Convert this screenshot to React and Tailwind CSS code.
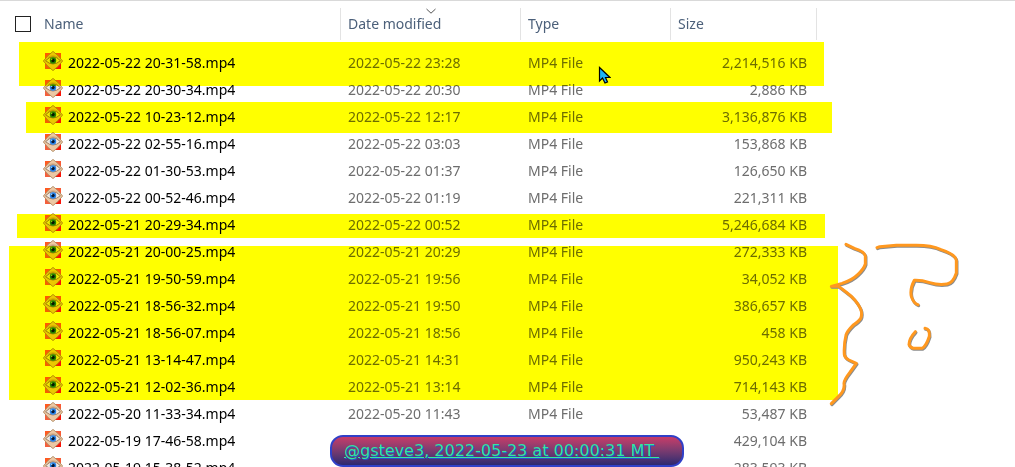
const files = [
  ['2022-05-22 20-31-58.mp4', '2022-05-22 23:28', 'MP4 File', '2,214,516 KB'],
  ['2022-05-22 20-30-34.mp4', '2022-05-22 20:30', 'MP4 File', '2,886 KB'],
  ['2022-05-22 10-23-12.mp4', '2022-05-22 12:17', 'MP4 File', '3,136,876 KB'],
  ['2022-05-22 02-55-16.mp4', '2022-05-22 03:03', 'MP4 File', '153,868 KB'],
  ['2022-05-22 01-30-53.mp4', '2022-05-22 01:37', 'MP4 File', '126,650 KB'],
  ['2022-05-22 00-52-46.mp4', '2022-05-22 01:19', 'MP4 File', '221,311 KB'],
  ['2022-05-21 20-29-34.mp4', '2022-05-22 00:52', 'MP4 File', '5,246,684 KB'],
  ['2022-05-21 20-00-25.mp4', '2022-05-21 20:29', 'MP4 File', '272,333 KB'],
  ['2022-05-21 19-50-59.mp4', '2022-05-21 19:56', 'MP4 File', '34,052 KB'],
  ['2022-05-21 18-56-32.mp4', '2022-05-21 19:50', 'MP4 File', '386,657 KB'],
  ['2022-05-21 18-56-07.mp4', '2022-05-21 18:56', 'MP4 File', '458 KB'],
  ['2022-05-21 13-14-47.mp4', '2022-05-21 14:31', 'MP4 File', '950,243 KB'],
  ['2022-05-21 12-02-36.mp4', '2022-05-21 13:14', 'MP4 File', '714,143 KB'],
  ['2022-05-20 11-33-34.mp4', '2022-05-20 11:43', 'MP4 File', '53,487 KB'],
  ['2022-05-19 17-46-58.mp4', '', '', '429,104 KB'],
  ['2022-05-19 15-38-52.mp4', '', '', '283,593 KB'],
];

function EyeIcon() {
  return (
    <svg className="-mt-[3px] h-5 w-5 shrink-0" viewBox="0 0 20 20" aria-hidden="true">
      <rect x="2" y="2" width="8" height="8" fill="#ff5a20" />
      <rect x="10" y="2" width="8" height="8" fill="#f85a34" />
      <rect x="2" y="10" width="8" height="8" fill="#f4603c" />
      <rect x="10" y="10" width="8" height="8" fill="#f81408" />
      <path
        d="M10 .4 15.2 4.8 19.6 10 15.2 15.2 10 19.6 4.8 15.2.4 10 4.8 4.8Z"
        fill="#ecc8a4"
        stroke="#b08a62"
        strokeWidth=".9"
      />
      <path d="M5.2 6.4Q10 3.2 14.8 6.4" fill="none" stroke="#c29a74" strokeWidth=".7" />
      <path d="M2.6 9.7Q10 1.9 17.4 9.7 10 16.3 2.6 9.7Z" fill="#efe9e0" stroke="#8a6a50" strokeWidth=".8" />
      <circle cx="10" cy="9.5" r="3.2" fill="#2682e8" />
      <circle cx="10" cy="9.5" r="1.7" fill="#061630" />
      <circle cx="8.6" cy="8.4" r=".8" fill="#8cd0ff" />
    </svg>
  );
}

function HeaderCell({ width, children }) {
  return (
    <th scope="col" className={`${width} h-[49px] p-0 pt-2 align-top font-normal`}>
      <div className="relative flex h-8 items-center border-r border-[#e3e3e3] pl-[7px]">{children}</div>
    </th>
  );
}

function Highlight({ place }) {
  return <div className={`pointer-events-none absolute bg-[#ffff00] mix-blend-multiply ${place}`} />;
}

function Scribble() {
  return (
    <svg
      className="pointer-events-none absolute top-[229px] left-[800px] h-[190px] w-[180px]"
      viewBox="0 0 540 570"
      fill="none"
      strokeLinecap="round"
      strokeLinejoin="round"
      aria-hidden="true"
    >
      <defs>
        <g id="ink">
          <path d="M139 44 164 56Q194 65 197 79V103Q193 117 175 134 158 151 127 161L95 170H117L139 187Q168 208 182 236 189 252 183 266 178 274 162 285 142 305 139 316 132 345 134 375 136 385 148 391L170 401 150 429Q132 452 133 462 136 482 116 501L95 522" />
          <path d="M232 54 240 51 290 47H350Q395 47 424 60 468 74 470 92V130Q460 160 442 163 417 167 390 159 365 151 344 152 330 178 335 200 342 222 355 225" />
          <path d="M347 306Q328 326 328 345 332 354 341 356H367Q379 351 389 320 391 298 376 296" />
        </g>
      </defs>
      <use href="#ink" x="1" y="2" stroke="#8c8c8c" strokeWidth="9" />
      <use href="#ink" x="-1" y="-1" stroke="#ff981f" strokeWidth="9" />
    </svg>
  );
}

export default function App() {
  return (
    <main className="relative h-screen overflow-hidden border-t border-[#d9d9d9] bg-white font-['Noto_Sans',sans-serif] text-[14px] leading-5">
      <div className="-mt-px">
        <table className="w-[817px] table-fixed border-collapse text-left text-[#6d6d6d]">
          <thead className="text-[#4c607a]">
            <tr>
              <HeaderCell width="w-[341px]">
                <label className="flex items-center pl-2">
                  <input
                    type="checkbox"
                    aria-label="Select all files"
                    className="h-4 w-4 appearance-none border border-[#222] bg-white"
                  />
                </label>
                <span className="pl-[13px]">Name</span>
              </HeaderCell>
              <HeaderCell width="w-[180px]">
                Date modified
                <svg className="absolute top-0 left-[85px] h-[6px] w-[10px]" viewBox="0 0 10 6" fill="none" aria-hidden="true">
                  <path d="M.5 1 5 5.2 9.5 1" stroke="#555" />
                </svg>
              </HeaderCell>
              <HeaderCell width="w-[150px]">Type</HeaderCell>
              <HeaderCell width="w-[146px]">Size</HeaderCell>
            </tr>
          </thead>
          <tbody>
            {files.map(([name, date, type, size]) => (
              <tr key={name} className="h-[27px] whitespace-nowrap">
                <td className="p-0 pl-[43px]">
                  <div className="flex items-center gap-[5px] text-black">
                    <EyeIcon />
                    <span>{name}</span>
                  </div>
                </td>
                <td className="p-0 pl-[7px]">{date}</td>
                <td className="p-0 pl-[7px]">{type}</td>
                <td className="p-0 pr-[10px] text-right">{size}</td>
              </tr>
            ))}
          </tbody>
        </table>
      </div>

      <Highlight place="top-[41px] left-[19px] h-[44px] w-[805px]" />
      <Highlight place="top-[101px] left-[26px] h-[31px] w-[806px]" />
      <Highlight place="top-[213px] left-[17px] h-[24px] w-[808px]" />
      <Highlight place="top-[245px] left-[9px] h-[154px] w-[829px]" />
      <Scribble />

      <svg className="pointer-events-none absolute top-[65px] left-[598px] h-[18px] w-[13px]" viewBox="0 0 13 18" aria-hidden="true">
        <path d="M1.5 1.5V15L4.5 12 7 17 9.5 16 7.5 11.5H12Z" fill="#1fb4f5" stroke="#000" strokeWidth="1.2" />
      </svg>

      <div className="absolute bottom-0 left-[330px] flex h-8 w-[354px] items-center rounded-[13px] border-2 border-[#3040c8] bg-linear-to-b from-[#c83a68] to-[#2c2870] px-3">
        <a
          href="#gsteve3"
          className="font-['DejaVu_Sans',sans-serif] text-[16px] whitespace-pre text-[#35e8a0] underline [text-shadow:1px_1px_0_#2a50c8]"
        >
          {'@gsteve3, 2022-05-23 at 00:00:31 MT '}
        </a>
      </div>
    </main>
  );
}
